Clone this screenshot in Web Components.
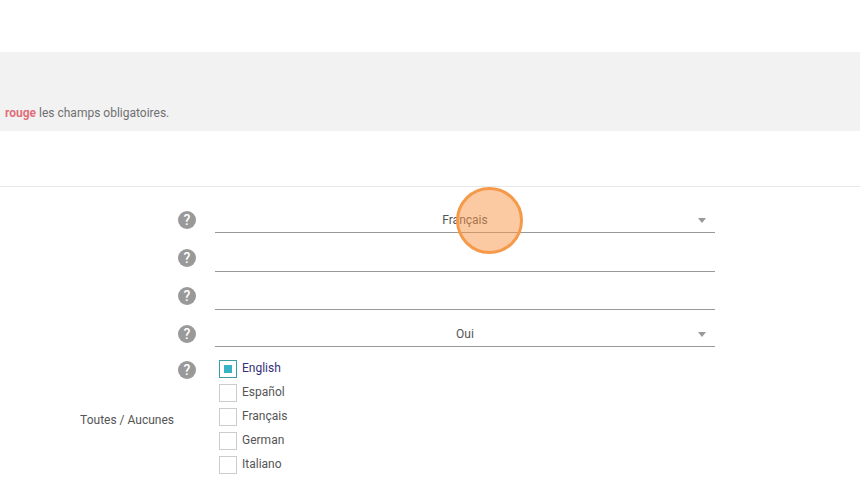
<!DOCTYPE html>
<html lang="fr">
<head>
<meta charset="utf-8">
<title>Formulaire</title>
<style>
  html, body { margin: 0; height: 100%; overflow: hidden; background: #fff; }
  body { font-family: Roboto, "Liberation Sans", sans-serif; font-size: 12px; color: #555; position: relative; }
</style>
</head>
<body>
<info-banner><b>rouge</b> les champs obligatoires.</info-banner>
<form-panel>
  <form-row><select-field>Français</select-field></form-row>
  <form-row style="--row-h:39px;--help-pad:5px"><line-field></line-field></form-row>
  <form-row style="--row-h:38px;--help-pad:5px"><line-field></line-field></form-row>
  <form-row style="--row-h:37px"><select-field>Oui</select-field></form-row>
  <lang-group label="Toutes / Aucunes">
    <check-item checked>English</check-item>
    <check-item>Español</check-item>
    <check-item>Français</check-item>
    <check-item>German</check-item>
    <check-item>Italiano</check-item>
  </lang-group>
</form-panel>
<click-marker></click-marker>

<script>
class InfoBanner extends HTMLElement {
  constructor() {
    super();
    this.attachShadow({ mode: 'open' });
    this.shadowRoot.innerHTML = `
      <style>
        :host {
          display: flex;
          align-items: flex-end;
          box-sizing: border-box;
          height: 79px;
          margin-top: 52px;
          padding: 0 0 10px 5px;
          background: #f2f2f2;
          color: #707070;
          font-size: 12px;
          line-height: 16px;
        }
        ::slotted(b) { color: #e0707a; font-weight: 700; }
      </style>
      <div><slot></slot></div>
    `;
  }
}

class FormPanel extends HTMLElement {
  constructor() {
    super();
    this.attachShadow({ mode: 'open' });
    this.shadowRoot.innerHTML = `
      <style>
        :host {
          display: block;
          margin-top: 55px;
          border-top: 1px solid #e8e8e8;
        }
      </style>
      <slot></slot>
    `;
  }
}

class HelpIcon extends HTMLElement {
  constructor() {
    super();
    this.attachShadow({ mode: 'open' });
    this.shadowRoot.innerHTML = `
      <style>
        :host {
          display: flex;
          align-items: center;
          justify-content: center;
          width: 18px;
          height: 18px;
          border-radius: 50%;
          background: #999;
          color: #fff;
          font: 500 14px/18px Roboto, sans-serif;
        }
      </style>
      ?
    `;
  }
}

class FormRow extends HTMLElement {
  constructor() {
    super();
    this.attachShadow({ mode: 'open' });
    this.shadowRoot.innerHTML = `
      <style>
        :host {
          display: grid;
          grid-template-columns: 215px 500px;
          height: var(--row-h, 46px);
        }
        .help {
          display: flex;
          justify-content: flex-end;
          align-items: flex-end;
          padding: 0 19px var(--help-pad, 4px) 0;
        }
      </style>
      <div class="help"><help-icon></help-icon></div>
      <slot></slot>
    `;
  }
}

class SelectField extends HTMLElement {
  constructor() {
    super();
    this.attachShadow({ mode: 'open' });
    this.shadowRoot.innerHTML = `
      <style>
        :host {
          display: flex;
          align-items: flex-end;
          justify-content: center;
          box-sizing: border-box;
          position: relative;
          border-bottom: 1px solid #999;
          padding-bottom: 4px;
          color: #555;
          font-size: 12px;
          line-height: 16px;
        }
        svg { position: absolute; right: 9px; bottom: 9px; }
      </style>
      <slot></slot>
      <svg width="8" height="5" viewBox="0 0 8 5"><path d="M0 0h8L4 5z" fill="#999"/></svg>
    `;
  }
}

class LineField extends HTMLElement {
  constructor() {
    super();
    this.attachShadow({ mode: 'open' });
    this.shadowRoot.innerHTML = `
      <style>
        :host { display: block; box-sizing: border-box; border-bottom: 1px solid #999; }
      </style>
    `;
  }
}

class LangGroup extends HTMLElement {
  constructor() {
    super();
    this.attachShadow({ mode: 'open' });
    this.shadowRoot.innerHTML = `
      <style>
        :host {
          display: grid;
          grid-template-columns: 215px 1fr;
        }
        .side {
          display: flex;
          flex-direction: column;
          align-items: flex-end;
        }
        help-icon { margin: 14px 19px 0 0; }
        .label {
          margin: 33px 41px 0 0;
          color: #555;
          font-size: 12px;
          line-height: 16px;
        }
        .list {
          display: flex;
          flex-direction: column;
          gap: 6px;
          padding: 13px 0 0 4px;
        }
      </style>
      <div class="side">
        <help-icon></help-icon>
        <div class="label"></div>
      </div>
      <div class="list"><slot></slot></div>
    `;
  }

  connectedCallback() {
    this.shadowRoot.querySelector('.label').textContent = this.getAttribute('label');
  }
}

class CheckItem extends HTMLElement {
  constructor() {
    super();
    this.attachShadow({ mode: 'open' });
    this.shadowRoot.innerHTML = `
      <style>
        :host {
          display: flex;
          align-items: center;
          gap: 5px;
          height: 18px;
          color: #555;
          font-size: 12px;
          line-height: 16px;
        }
        :host([checked]) { color: #35307a; }
        .box {
          box-sizing: border-box;
          display: flex;
          align-items: center;
          justify-content: center;
          width: 18px;
          height: 18px;
          border: 1px solid #ccc;
          background: #fff;
        }
        :host([checked]) .box { border-color: #3a9ea5; }
        :host([checked]) .box::after {
          content: '';
          width: 8px;
          height: 8px;
          background: #36b3c4;
        }
        .text { position: relative; top: -1px; }
      </style>
      <span class="box"></span>
      <span class="text"><slot></slot></span>
    `;
  }
}

class ClickMarker extends HTMLElement {
  constructor() {
    super();
    this.attachShadow({ mode: 'open' });
    this.shadowRoot.innerHTML = `
      <style>
        :host {
          position: absolute;
          left: 456px;
          top: 187px;
          box-sizing: border-box;
          width: 67px;
          height: 67px;
          border: 3px solid #f59a4a;
          border-radius: 50%;
          background: rgba(248, 150, 70, .5);
        }
      </style>
    `;
  }
}

customElements.define('info-banner', InfoBanner);
customElements.define('form-panel', FormPanel);
customElements.define('help-icon', HelpIcon);
customElements.define('form-row', FormRow);
customElements.define('select-field', SelectField);
customElements.define('line-field', LineField);
customElements.define('lang-group', LangGroup);
customElements.define('check-item', CheckItem);
customElements.define('click-marker', ClickMarker);
</script>
</body>
</html>
